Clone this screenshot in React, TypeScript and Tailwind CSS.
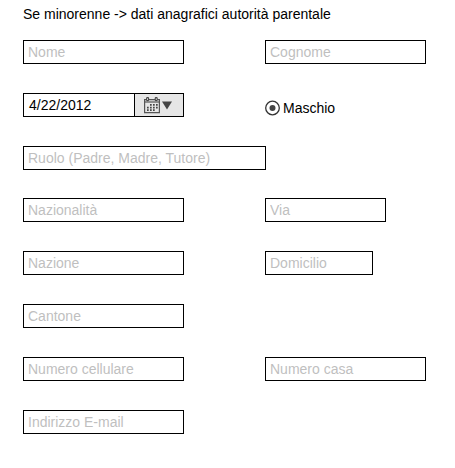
import React from "react";

function Field({ label, width = "w-[161px]" }: { label: string; width?: string }) {
  return (
    <input
      type="text"
      placeholder={label}
      className={`block h-6 ${width} border border-black bg-white px-1 pb-px text-[14px] leading-5 text-black outline-none placeholder:text-[#bfbfbf] placeholder:opacity-100`}
    />
  );
}

function CalendarIcon() {
  return (
    <svg width="16" height="17" viewBox="0 0 16 17" fill="none">
      <path d="M0.6 2.6H15.4V15.6H0.6Z" stroke="#555" strokeWidth="1.2" />
      <path d="M0 5H16" stroke="#555" strokeWidth="1.2" />
      <rect x="2.6" y="0.6" width="2" height="3" rx="0.8" fill="#e6e6e6" stroke="#444" strokeWidth="1.1" />
      <rect x="11.2" y="0.6" width="2" height="3" rx="0.8" fill="#e6e6e6" stroke="#444" strokeWidth="1.1" />
      <g fill="#444">
        <path d="M6 7h1.7v1.7H6zM9 7h1.7v1.7H9zM12 7h1.7v1.7H12z" />
        <path d="M3 9.7h1.7v1.7H3zM6 9.7h1.7v1.7H6zM9 9.7h1.7v1.7H9zM12 9.7h1.7v1.7H12z" />
        <path d="M3 12.3h1.7V14H3zM6 12.3h1.7V14H6zM9 12.3h1.7V14H9z" />
      </g>
    </svg>
  );
}

function DateField() {
  return (
    <div className="flex h-6 w-[161px] border border-black bg-white">
      <span className="w-[110px] pl-[5px] text-[14px] leading-[22px]">4/22/2012</span>
      <button
        type="button"
        aria-label="Calendario"
        className="flex flex-1 items-center border-l border-black bg-[#e6e6e6] pl-[9px]"
      >
        <CalendarIcon />
        <svg className="ml-[2px]" width="10" height="9" viewBox="0 0 10 9">
          <path d="M0 0.5H10L5 8.5Z" fill="#444" />
        </svg>
      </button>
    </div>
  );
}

function Radio({ label }: { label: string }) {
  return (
    <label className="flex h-[30px] items-center">
      <svg width="15" height="16" viewBox="0 0 15 16">
        <circle cx="7.5" cy="8" r="6.8" fill="#fff" stroke="#333" strokeWidth="1.3" />
        <circle cx="7.5" cy="8" r="3" fill="#444" />
      </svg>
      <span className="ml-[3px] text-[14px] leading-4">{label}</span>
    </label>
  );
}

function Row({ children, height = "h-[53px]" }: { children: React.ReactNode; height?: string }) {
  return <div className={`flex items-start gap-[81px] ${height}`}>{children}</div>;
}

export default function App() {
  return (
    <form className="h-[468px] w-[455px] bg-white pl-[23px] pt-[6px] font-['Liberation_Sans',Arial,sans-serif] text-black">
      <h1 className="h-[34px] text-[14px] leading-4 whitespace-nowrap">
        Se minorenne -&gt; dati anagrafici autorità parentale
      </h1>
      <Row>
        <Field label="Nome" />
        <Field label="Cognome" />
      </Row>
      <Row>
        <DateField />
        <Radio label="Maschio" />
      </Row>
      <Row height="h-[52px]">
        <Field label="Ruolo (Padre, Madre, Tutore)" width="w-[243px]" />
      </Row>
      <Row>
        <Field label="Nazionalità" />
        <Field label="Via" width="w-[121px]" />
      </Row>
      <Row>
        <Field label="Nazione" />
        <Field label="Domicilio" width="w-[108px]" />
      </Row>
      <Row>
        <Field label="Cantone" />
      </Row>
      <Row>
        <Field label="Numero cellulare" />
        <Field label="Numero casa" />
      </Row>
      <Row height="h-6">
        <Field label="Indirizzo E-mail" />
      </Row>
    </form>
  );
}
